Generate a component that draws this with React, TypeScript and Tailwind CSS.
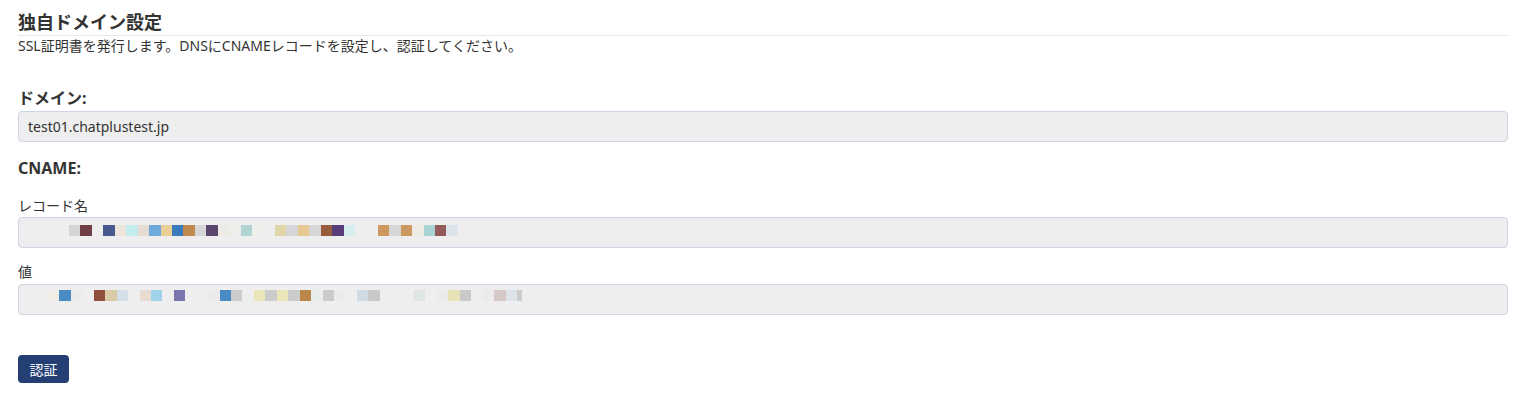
import React from 'react';

const FONT = { fontFamily: '"Noto Sans", "Noto Sans CJK JP", sans-serif' };

// obscured (mosaic) values, one colour per block; null = empty block
const RECORD: (string | null)[] = [
  '#d4d4d4', '#6e3d46', null, '#485a8c', '#ede5dc', '#c3ecec', '#e7dcd2', '#6fa8db', '#ebcf98', '#3a7bbd',
  '#c08a4f', '#d6d6d6', '#5b4670', '#ecebe6', '#eeede9', '#b0d5d3', '#efefec', null, '#e0d5a6', '#d5d6da',
  '#e8c991', '#d6d6d6', '#965c3c', '#593d7b', '#d6eeee', null, null, '#cd985f', '#d6d6d6', '#cd985f',
  '#eeebe5', '#a7d3d2', '#935a5a', '#dce3ea',
];

const VALUE: (string | null)[] = [
  '#efede6', '#4a8bc6', '#ebebeb', null, '#8f4f3c', '#d8cba6', '#d4dfe9', null, '#e8dcd2', '#9fd3ec',
  null, '#7a75ae', null, null, '#ebebeb', '#4a8bc6', '#cccccc', null, '#eae6b7', '#cccccc',
  '#eae6b7', '#cbcbcb', '#bb8649', '#e8eded', '#cbcbcb', '#ebebeb', null, '#cfdbe5', '#c9c9c9', null,
  null, null, '#dee6e3', null, '#ebebeb', '#e8e3b6', '#c9c9c9', null, '#ebebeb', '#d7c8c8',
  '#dce4ea', '#cccccc',
];

function Mosaic({ blocks, lastNarrow }: { blocks: (string | null)[]; lastNarrow?: boolean }) {
  return (
    <div className="flex">
      {blocks.map((c, i) => (
        <span
          key={i}
          className={lastNarrow && i === blocks.length - 1 ? 'block h-[11px] w-[5px] shrink-0' : 'block h-[11px] w-[11.45px] shrink-0'}
          style={{ backgroundColor: c ?? 'transparent' }}
        />
      ))}
    </div>
  );
}

export default function App() {
  return (
    <div className="min-h-screen bg-white pl-[18px] pr-[21px] text-[#333333]" style={FONT}>
      <h2 className="border-b border-[#e6e8ee] pt-[9px] text-[18px] font-bold leading-[26px]">独自ドメイン設定</h2>
      <p className="text-[14px] leading-[20px]">SSL証明書を発行します。DNSにCNAMEレコードを設定し、認証してください。</p>

      <h3 className="mt-[31px] text-[16px] font-bold leading-[22px]">ドメイン:</h3>
      <div className="mt-[2px] flex h-[31px] items-center rounded border border-[#ccd5e3] bg-[#eeeeee] px-[9px] text-[14px]">
        test01.chatplustest.jp
      </div>

      <h3 className="mt-[15px] text-[16px] font-bold leading-[22px]">CNAME:</h3>

      <label className="mt-[17px] block text-[14px] leading-[20px]">レコード名</label>
      <div className="mt-[1px] h-[31px] rounded border border-[#ccd5e3] bg-[#eeeeee] pl-[50px] pt-[7px]">
        <Mosaic blocks={RECORD} />
      </div>

      <label className="mt-[14px] block text-[14px] leading-[20px]">値</label>
      <div className="mt-[2px] h-[31px] rounded border border-[#ccd5e3] bg-[#eeeeee] pl-[29px] pt-[5px]">
        <Mosaic blocks={VALUE} lastNarrow />
      </div>

      <button className="mt-[40px] flex h-[28px] w-[51px] items-center justify-center rounded bg-[#243f74] text-[14px] text-white">
        認証
      </button>
    </div>
  );
}
